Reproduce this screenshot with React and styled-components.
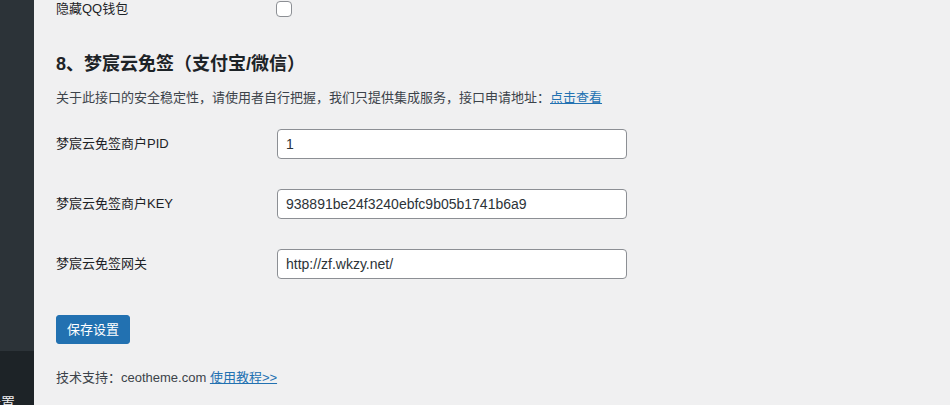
import React from 'react'
import styled, { createGlobalStyle } from 'styled-components'

const GlobalStyle = createGlobalStyle`
  html, body {
    margin: 0;
    padding: 0;
    background: #f0f0f1;
  }
  body {
    font-family: "Liberation Sans", "Noto Sans CJK SC", sans-serif;
    font-size: 13px;
    color: #3c434a;
  }
`;

const Page = styled.div`
  display: flex;
  height: 405px;
  overflow: hidden;
`;

const Sidebar = styled.nav`
  width: 34px;
  flex-shrink: 0;
  display: flex;
  flex-direction: column;
  background: #1d2327;
`;

const SubMenu = styled.div`
  height: 351px;
  background: #2c3338;
`;

const MenuItem = styled.div`
  flex: 1;
  display: flex;
  justify-content: flex-end;
  align-items: flex-end;
  overflow: hidden;
  padding-right: 19px;
  color: #f0f0f1;
  font-size: 14px;
  line-height: 16px;
  margin-bottom: -6px;
  white-space: nowrap;
`;

const Content = styled.main`
  flex: 1;
  padding-left: 22px;
  display: flex;
  flex-direction: column;
`;

const CheckRow = styled.div`
  display: flex;
  align-items: center;
  height: 18px;
  color: #1d2327;
`;

const Label = styled.div`
  width: 220px;
  flex-shrink: 0;
  color: #1d2327;
  font-size: 13px;
  line-height: 20px;
`;

const Checkbox = styled.span`
  width: 14px;
  height: 14px;
  border: 1px solid #8c8f94;
  border-radius: 4px;
  background: #fff;
`;

const Heading = styled.h2`
  margin: 34px 0 0;
  font-size: 18px;
  line-height: 24px;
  font-weight: 700;
  color: #1d2327;
`;

const Description = styled.p`
  margin: 12px 0 0;
  font-size: 13px;
  line-height: 20px;
  color: #3c434a;
`;

const Link = styled.a`
  color: #2271b1;
  text-decoration: underline;
`;

const Form = styled.div`
  margin-top: 21px;
  display: flex;
  flex-direction: column;
  gap: 30px;
`;

const Row = styled.div`
  display: flex;
  align-items: center;
  height: 30px;
`;

const Input = styled.input`
  box-sizing: border-box;
  width: 350px;
  height: 30px;
  margin-left: 1px;
  padding: 0 8px;
  border: 1px solid #8c8f94;
  border-radius: 4px;
  background: #fff;
  color: #2c3338;
  font-family: "Liberation Sans", "Noto Sans CJK SC", sans-serif;
  font-size: 14px;
  outline: none;
`;

const Button = styled.button`
  align-self: flex-start;
  margin-top: 36px;
  height: 29px;
  padding: 0 10px;
  border: 1px solid #2271b1;
  border-radius: 3px;
  background: #2271b1;
  color: #fff;
  font-family: "Liberation Sans", "Noto Sans CJK SC", sans-serif;
  font-size: 13px;
  line-height: 27px;
  cursor: pointer;
`;

const Footer = styled.p`
  margin: 24px 0 0;
  font-size: 13px;
  line-height: 20px;
  color: #3c434a;
`;

const fields = [
  { label: '梦宸云免签商户PID', value: '1' },
  { label: '梦宸云免签商户KEY', value: '938891be24f3240ebfc9b05b1741b6a9' },
  { label: '梦宸云免签网关', value: 'http://zf.wkzy.net/' },
];

const App = () => {
  return (
    <>
      <GlobalStyle />
      <Page>
        <Sidebar>
          <SubMenu />
          <MenuItem>设置</MenuItem>
        </Sidebar>
        <Content>
          <CheckRow>
            <Label>隐藏QQ钱包</Label>
            <Checkbox />
          </CheckRow>
          <Heading>8、梦宸云免签（支付宝/微信）</Heading>
          <Description>
            关于此接口的安全稳定性，请使用者自行把握，我们只提供集成服务，接口申请地址：<Link href="#">点击查看</Link>
          </Description>
          <Form>
            {fields.map((f) => (
              <Row key={f.label}>
                <Label>{f.label}</Label>
                <Input defaultValue={f.value} />
              </Row>
            ))}
          </Form>
          <Button>保存设置</Button>
          <Footer>
            技术支持：ceotheme.com <Link href="#">使用教程&gt;&gt;</Link>
          </Footer>
        </Content>
      </Page>
    </>
  )
}

export default App;
